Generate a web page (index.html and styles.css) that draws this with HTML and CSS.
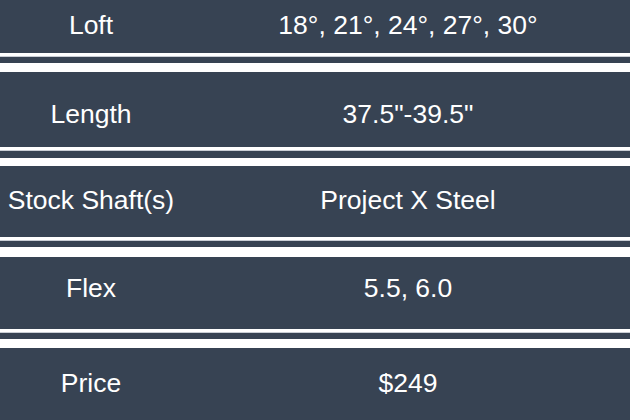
FILE: index.html
```html
<!DOCTYPE html>
<html>
<head>
<meta charset="utf-8">
<link rel="stylesheet" href="styles.css">
</head>
<body>
<div class="table">
  <div class="row r1"><div class="label">Loft</div><div class="value">18°, 21°, 24°, 27°, 30°</div></div>
  <div class="sep s1"></div>
  <div class="row r2"><div class="label">Length</div><div class="value">37.5"-39.5"</div></div>
  <div class="sep s2"></div>
  <div class="row r3"><div class="label">Stock Shaft(s)</div><div class="value">Project X Steel</div></div>
  <div class="sep s3"></div>
  <div class="row r4"><div class="label">Flex</div><div class="value">5.5, 6.0</div></div>
  <div class="sep s4"></div>
  <div class="row r5"><div class="label">Price</div><div class="value">$249</div></div>
</div>
</body>
</html>
```
FILE: styles.css
```css
html, body {
  margin: 0;
  padding: 0;
  background: #374353;
}
.table {
  width: 630px;
  height: 420px;
  display: flex;
  flex-direction: column;
  overflow: hidden;
  background: #374353;
  color: #ffffff;
  font-family: "Liberation Sans", Arial, sans-serif;
  font-size: 26.5px;
}
.row {
  display: grid;
  grid-template-columns: 182px 452px;
  align-items: center;
  box-sizing: border-box;
  line-height: 1;
  flex: none;
}
.row .label, .row .value {
  text-align: center;
  white-space: nowrap;
}
.r1 { height: 53px; padding-bottom: 2px; }
.r2 { height: 75px; padding-top: 9px; }
.r3 { height: 71px; padding-bottom: 3px; }
.r4 { height: 72px; padding-bottom: 10px; }
.r5 { height: 72px; padding-bottom: 1px; }
.sep {
  flex: none;
  box-sizing: border-box;
  border-top: 3px solid #ffffff;
  box-shadow: inset 0 1px 0 #c9ced5;
}
.s1 { height: 19px; border-bottom: 9px solid #ffffff; }
.s2 { height: 19px; border-bottom: 8px solid #ffffff; }
.s3 { height: 20px; border-bottom: 10px solid #ffffff; }
.s4 { height: 19px; border-bottom: 9px solid #ffffff; }
```
